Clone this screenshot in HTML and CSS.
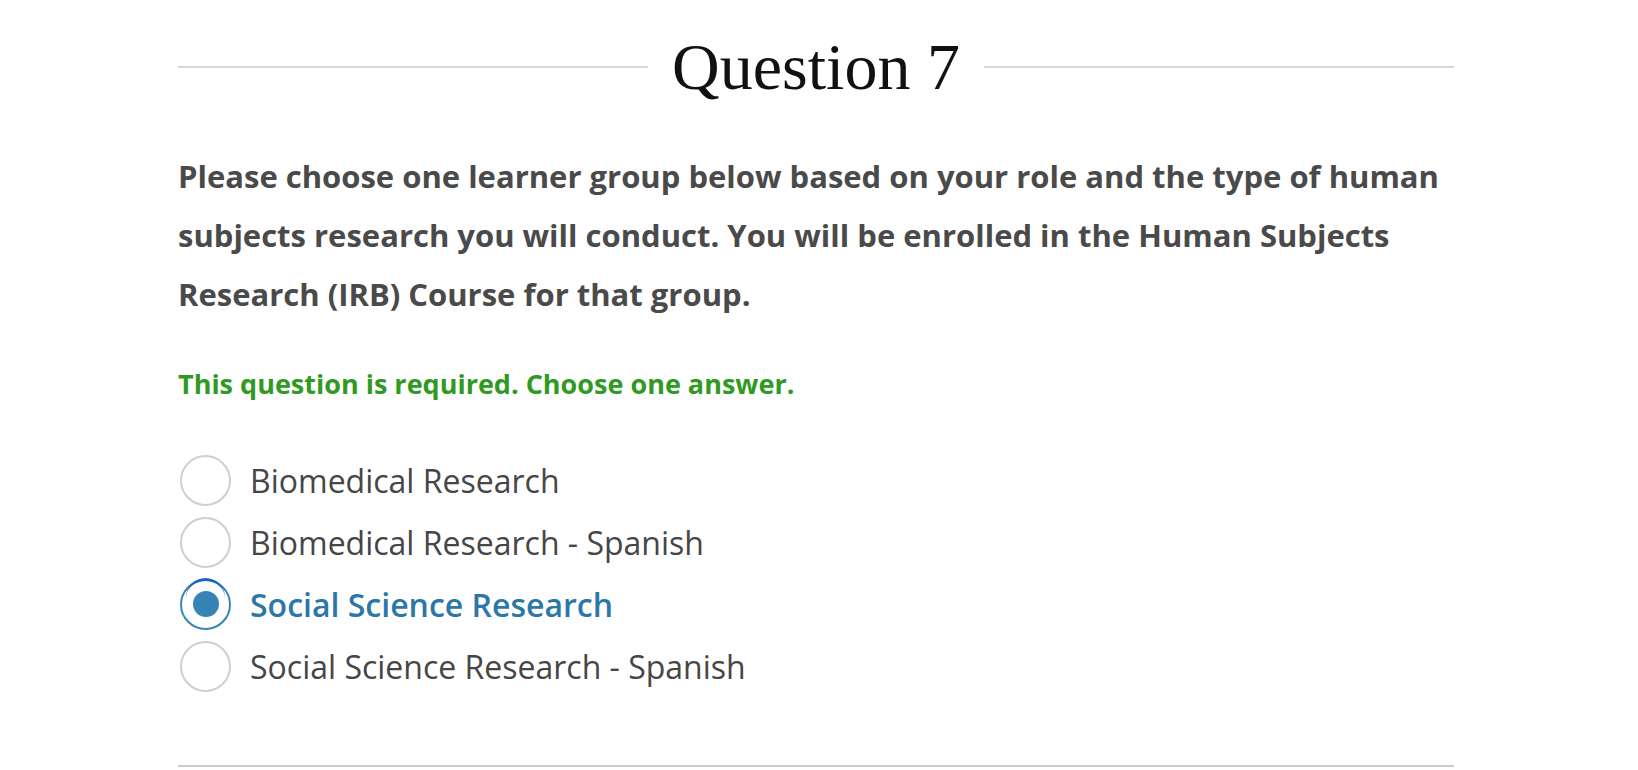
FILE: index.html
```html
<!DOCTYPE html>
<html lang="en">
<head>
<meta charset="utf-8">
<title>Question 7</title>
<link rel="stylesheet" href="styles.css">
</head>
<body>
<div class="page">
  <div class="question">
    <div class="q-head">
      <span class="rule"></span>
      <h2 class="q-title">Question 7</h2>
      <span class="rule"></span>
    </div>
    <p class="q-text">Please choose one learner group below based on your role and the type of human subjects research you will conduct. You will be enrolled in the Human Subjects Research (IRB) Course for that group.</p>
    <p class="q-req">This question is required. Choose one answer.</p>
    <ul class="options">
      <li class="option"><span class="radio"></span><span class="label">Biomedical Research</span></li>
      <li class="option"><span class="radio"></span><span class="label">Biomedical Research - Spanish</span></li>
      <li class="option selected"><span class="radio"></span><span class="label">Social Science Research</span></li>
      <li class="option"><span class="radio"></span><span class="label">Social Science Research - Spanish</span></li>
    </ul>
    <div class="bottom-rule"></div>
  </div>
</div>
</body>
</html>
```

FILE: styles.css
```css
html, body {
  margin: 0;
  padding: 0;
  background: #fff;
}
.page {
  width: 1276px;
  margin-left: 178px;
  font-family: "Open Sans", "Liberation Sans", sans-serif;
}
.question {
  display: flex;
  flex-direction: column;
}
.q-head {
  display: flex;
  align-items: center;
  gap: 24px;
  height: 134px;
}
.rule {
  flex: 1;
  height: 2px;
  background: #d6d6d6;
}
.q-title {
  margin: 0;
  font-family: "Liberation Serif", serif;
  font-weight: 400;
  font-size: 66px;
  line-height: 1;
  color: #111;
}
.q-text {
  margin: 13px 0 0;
  font-weight: 700;
  font-size: 31px;
  line-height: 59px;
  color: #4a4a4a;
}
.q-req {
  margin: 40px 0 0;
  font-weight: 700;
  font-size: 27px;
  line-height: 40px;
  color: #2f9a1f;
}
.options {
  list-style: none;
  margin: 50px 0 0;
  padding: 0;
  display: flex;
  flex-direction: column;
  gap: 10px;
}
.option {
  display: flex;
  align-items: center;
  gap: 19px;
  height: 52px;
  padding-left: 2px;
}
.radio {
  position: relative;
  box-sizing: border-box;
  width: 51px;
  height: 51px;
  border: 2px solid #cfcfcf;
  border-radius: 50%;
  background: #fff;
  flex: none;
}
.label {
  font-size: 32px;
  color: #464646;
}
.selected .radio {
  border-color: #3a84b6;
}
.selected .radio::after {
  content: "";
  position: absolute;
  left: 50%;
  top: 50%;
  width: 26px;
  height: 26px;
  margin: -13px 0 0 -13px;
  border-radius: 50%;
  background: #3584b5;
}
.selected .radio::before {
  content: "";
  position: absolute;
  left: 4px;
  top: -3px;
  width: 39px;
  height: 20px;
  box-sizing: border-box;
  border-top: 3px solid #1d62c9;
  border-radius: 50% 50% 0 0 / 100% 100% 0 0;
}
.selected .label {
  color: #2b77a8;
  font-weight: 600;
}
.bottom-rule {
  margin-top: 73px;
  height: 2px;
  background: #cccccc;
}
```
